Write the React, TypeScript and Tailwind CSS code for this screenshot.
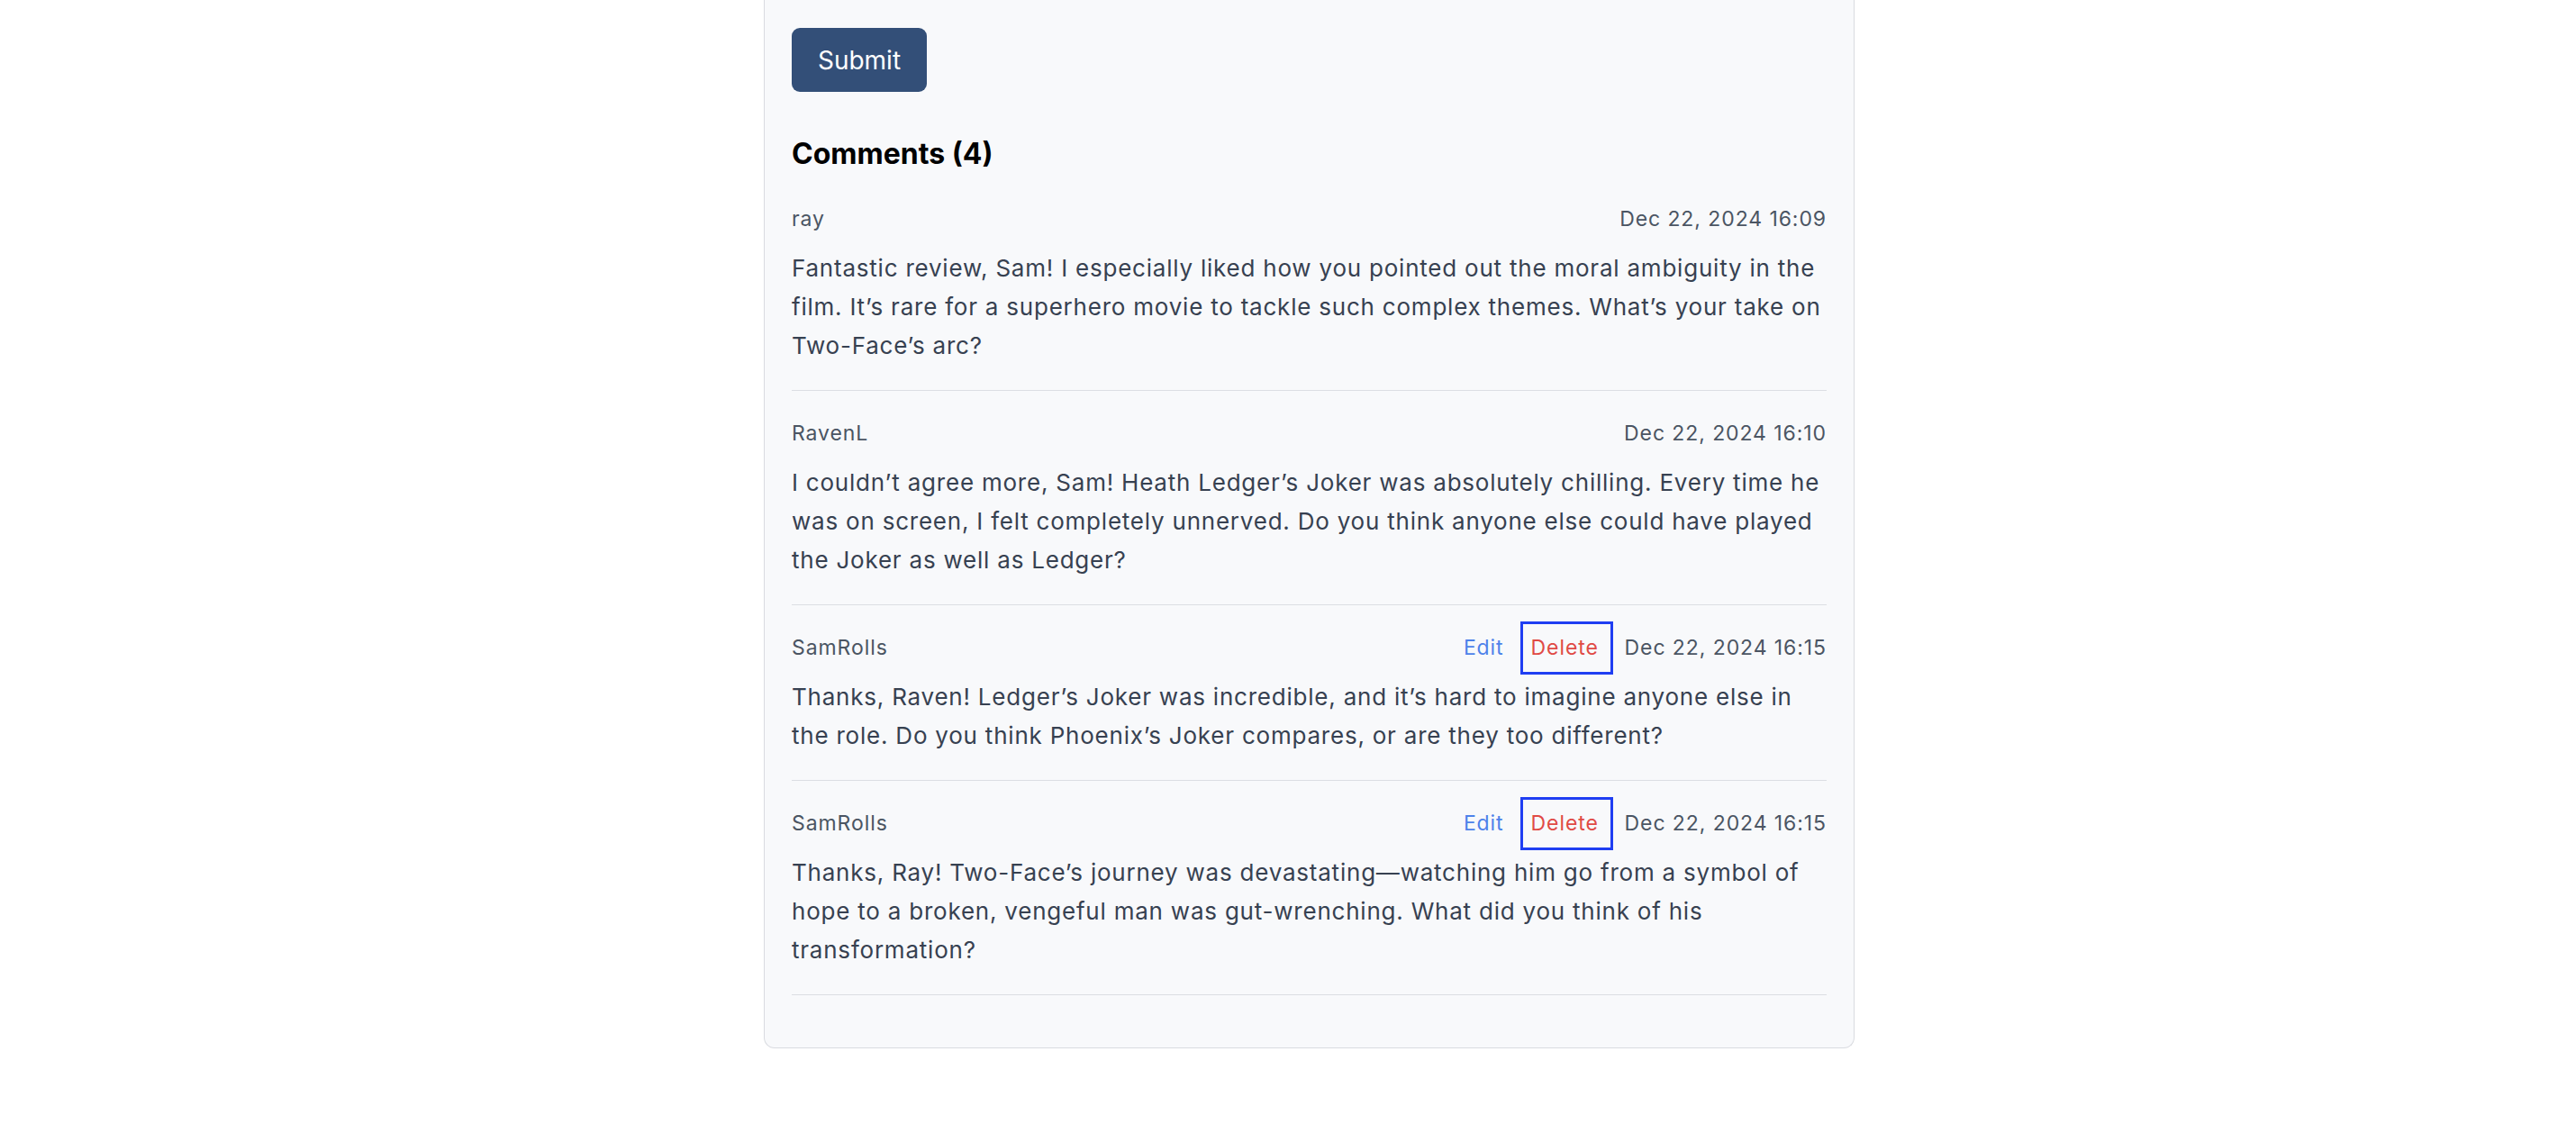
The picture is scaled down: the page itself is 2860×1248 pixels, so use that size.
type Comment = {
  author: string;
  date: string;
  body: string;
  own?: boolean;
};

const comments: Comment[] = [
  {
    author: "ray",
    date: "Dec 22, 2024 16:09",
    body: "Fantastic review, Sam! I especially liked how you pointed out the moral ambiguity in the film. It\u2019s rare for a superhero movie to tackle such complex themes. What\u2019s your take on Two-Face\u2019s arc?",
  },
  {
    author: "RavenL",
    date: "Dec 22, 2024 16:10",
    body: "I couldn\u2019t agree more, Sam! Heath Ledger\u2019s Joker was absolutely chilling. Every time he was on screen, I felt completely unnerved. Do you think anyone else could have played the Joker as well as Ledger?",
  },
  {
    author: "SamRolls",
    date: "Dec 22, 2024 16:15",
    body: "Thanks, Raven! Ledger\u2019s Joker was incredible, and it\u2019s hard to imagine anyone else in the role. Do you think Phoenix\u2019s Joker compares, or are they too different?",
    own: true,
  },
  {
    author: "SamRolls",
    date: "Dec 22, 2024 16:15",
    body: "Thanks, Ray! Two-Face\u2019s journey was devastating\u2014watching him go from a symbol of hope to a broken, vengeful man was gut-wrenching. What did you think of his transformation?",
    own: true,
  },
];

function CommentItem({ c, first }: { c: Comment; first: boolean }) {
  return (
    <div className={`border-b border-[#dcdee3] pb-[28px] ${first ? "" : "pt-[18px]"}`}>
      <div className="flex h-[59px] items-center justify-between text-[23px] tracking-[0.04em] text-[#4b5563]">
        <span>{c.author}</span>
        <div className="flex items-center">
          {c.own && (
            <>
              <span className="mr-[18px] text-[#4d82ea]">Edit</span>
              <span className="flex h-[59px] w-[103px] items-center border-[3px] border-[#1f3ef2] pl-[9px] text-[#e04a45]">
                Delete
              </span>
            </>
          )}
          <span className={c.own ? "ml-[13px]" : ""}>{c.date}</span>
        </div>
      </div>
      <p className="mt-[3px] text-[26px] leading-[43px] tracking-[0.03em] text-[#374151]">{c.body}</p>
    </div>
  );
}

export default function App() {
  return (
    <div className="min-h-[1248px] bg-white font-['Inter',sans-serif]">
      <div className="ml-[848px] w-[1211px] rounded-b-[12px] border border-t-0 border-[#d9dbe0] bg-[#f8f9fb] pb-[58px] pl-[30px] pr-[30px] pt-[31px]">
        <button className="flex h-[71px] w-[150px] items-center justify-center rounded-[9px] bg-[#334f78] text-[28px] text-white">
          Submit
        </button>

        <h3 className="mt-[46px] h-[46px] text-[32px] font-bold leading-[46px] text-black">
          Comments ({comments.length})
        </h3>

        <div className="mt-[20px]">
          {comments.map((c, i) => (
            <CommentItem key={i} c={c} first={i === 0} />
          ))}
        </div>
      </div>
    </div>
  );
}
